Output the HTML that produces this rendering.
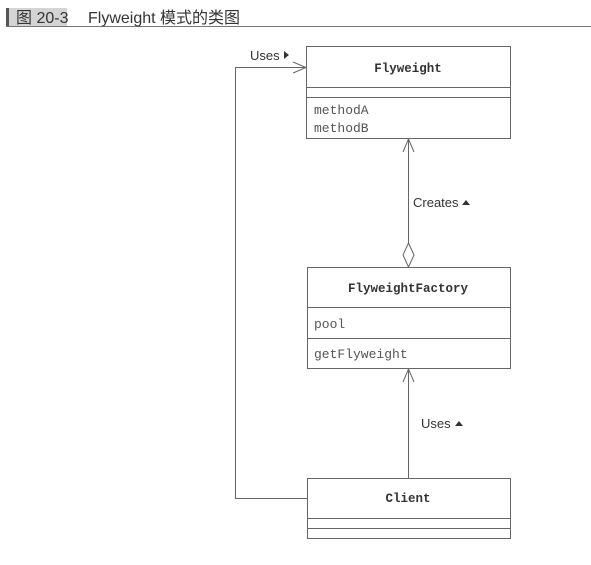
<!DOCTYPE html>
<html><head><meta charset="utf-8"><style>
body{margin:0;background:#fff;width:591px;height:565px;overflow:hidden;font-family:"Liberation Sans","Noto Sans CJK SC",sans-serif}
svg{position:absolute;left:0;top:0}
</style></head><body>
<svg width="591" height="565" xmlns="http://www.w3.org/2000/svg">
<rect x="6" y="8" width="3" height="19" fill="#555"/>
<rect x="9" y="8" width="58" height="19" fill="#d4d4d4"/>
<line x1="6" y1="26.5" x2="591" y2="26.5" stroke="#777" stroke-width="1"/>
<text x="16" y="23" font-size="16" fill="#333" font-family="Liberation Sans,Noto Sans CJK SC,sans-serif">图 20-3</text>
<text x="88" y="23" font-size="16" fill="#333" font-family="Liberation Sans,Noto Sans CJK SC,sans-serif">Flyweight 模式的类图</text>
<g stroke="#666" fill="none" stroke-width="1">
<rect x="306.5" y="46.5" width="204" height="92"/>
<line x1="306" y1="87.5" x2="510" y2="87.5"/>
<line x1="306" y1="97.5" x2="510" y2="97.5"/>
<rect x="307.5" y="267.5" width="203" height="101"/>
<line x1="307" y1="307.5" x2="510" y2="307.5"/>
<line x1="307" y1="338.5" x2="510" y2="338.5"/>
<rect x="307.5" y="478.5" width="203" height="60"/>
<line x1="307" y1="518.5" x2="510" y2="518.5"/>
<line x1="307" y1="528.5" x2="510" y2="528.5"/>
<polyline points="307,498.5 235.5,498.5 235.5,67.5 306,67.5"/>
<polyline points="293,62 306,67.5 293,73"/>
<line x1="408.5" y1="139" x2="408.5" y2="243"/>
<polyline points="403,152 408.5,139 414,152"/>
<polygon points="408.5,243 414,255 408.5,267 403,255"/>
<line x1="408.5" y1="369" x2="408.5" y2="478"/>
<polyline points="403,382 408.5,369 414,382"/>
</g>
<g font-family="Liberation Mono,monospace" fill="#333">
<text x="408" y="72" font-size="12.5" font-weight="bold" text-anchor="middle">Flyweight</text>
<text x="314" y="114" font-size="13" fill="#555">methodA</text>
<text x="314" y="132" font-size="13" fill="#555">methodB</text>
<text x="408" y="292" font-size="12.5" font-weight="bold" text-anchor="middle">FlyweightFactory</text>
<text x="314" y="328" font-size="13" fill="#555">pool</text>
<text x="314" y="358" font-size="13" fill="#555">getFlyweight</text>
<text x="408" y="502" font-size="12.5" font-weight="bold" text-anchor="middle">Client</text>
</g>
<g font-size="13" fill="#333">
<text x="250" y="60">Uses</text>
<polygon points="284,51 289,55 284,59" fill="#333"/>
<text x="413" y="207">Creates</text>
<polygon points="462,205 466,200 470,205" fill="#333"/>
<text x="421" y="428">Uses</text>
<polygon points="455,426 459,421 463,426" fill="#333"/>
</g>
</svg>
</body></html>
